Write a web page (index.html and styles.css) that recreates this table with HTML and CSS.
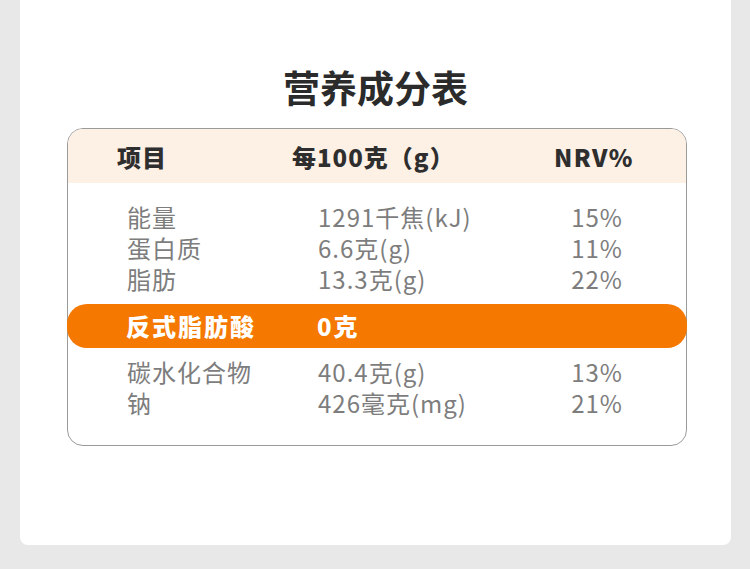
FILE: index.html
```html
<!DOCTYPE html>
<html lang="zh">
<head>
<meta charset="utf-8">
<link rel="stylesheet" href="styles.css">
</head>
<body>
<div class="card">
  <h1 class="title">营养成分表</h1>
  <div class="table">
    <div class="head">
      <span class="h1">项目</span>
      <span class="h2">每100克（g）</span>
      <span class="h3">NRV%</span>
    </div>
    <div class="group g1">
      <div class="row"><span class="c1">能量</span><span class="c2">1291千焦(kJ)</span><span class="c3">15%</span></div>
      <div class="row"><span class="c1">蛋白质</span><span class="c2">6.6克(g)</span><span class="c3">11%</span></div>
      <div class="row"><span class="c1">脂肪</span><span class="c2">13.3克(g)</span><span class="c3">22%</span></div>
    </div>
    <div class="hl">
      <span class="c1">反式脂肪酸</span><span class="c2">0克</span><span class="c3"></span>
    </div>
    <div class="group g2">
      <div class="row"><span class="c1">碳水化合物</span><span class="c2">40.4克(g)</span><span class="c3">13%</span></div>
      <div class="row"><span class="c1">钠</span><span class="c2">426毫克(mg)</span><span class="c3">21%</span></div>
    </div>
  </div>
</div>
</body>
</html>
```

FILE: styles.css
```css
* { box-sizing: border-box; }
html, body { margin: 0; padding: 0; }
body {
  background: #e8e8e8;
  font-family: "Noto Sans CJK SC", "Noto Sans", sans-serif;
  width: 750px;
  height: 569px;
  overflow: hidden;
}
.card {
  margin: 0 19px 0 20px;
  height: 545px;
  background: #fff;
  border-radius: 0 0 8px 8px;
  padding-top: 61px;
}
.title {
  margin: 0;
  text-align: center;
  font-size: 37px;
  line-height: 52px;
  font-weight: 700;
  color: #2b2b2b;
}
.table {
  margin: 15px 0 0 47px;
  width: 620px;
  height: 318px;
  border: 1px solid #9a9a9a;
  border-radius: 16px;
  display: flex;
  flex-direction: column;
}
.head {
  height: 54px;
  background: #fdf0e5;
  border-radius: 15px 15px 0 0;
  display: grid;
  grid-template-columns: 175px 262px 1fr;
  align-items: center;
  padding-left: 49px;
  font-size: 24px;
  font-weight: 900;
  color: #2e2e2e;
  letter-spacing: 1px;
}
.h3 { letter-spacing: 1.5px; }
.group { display: flex; flex-direction: column; }
.g1 { height: 121px; padding-top: 18px; }
.g2 { flex: 1; padding-top: 8px; }
.row, .hl {
  display: grid;
  grid-template-columns: 191px 229px 100px;
  padding-left: 59px;
  align-items: center;
}
.row {
  height: 31px;
  line-height: 31px;
  font-size: 24px;
  letter-spacing: 1px;
  color: #7d7d7d;
}
.c3 { text-align: center; }
.hl {
  margin: 0 -1px;
  height: 44px;
  line-height: 44px;
  background: #f57800;
  border-radius: 20px;
  color: #fff;
  font-size: 24px;
  font-weight: 900;
  letter-spacing: 2px;
  padding-left: 59px;
}
```
